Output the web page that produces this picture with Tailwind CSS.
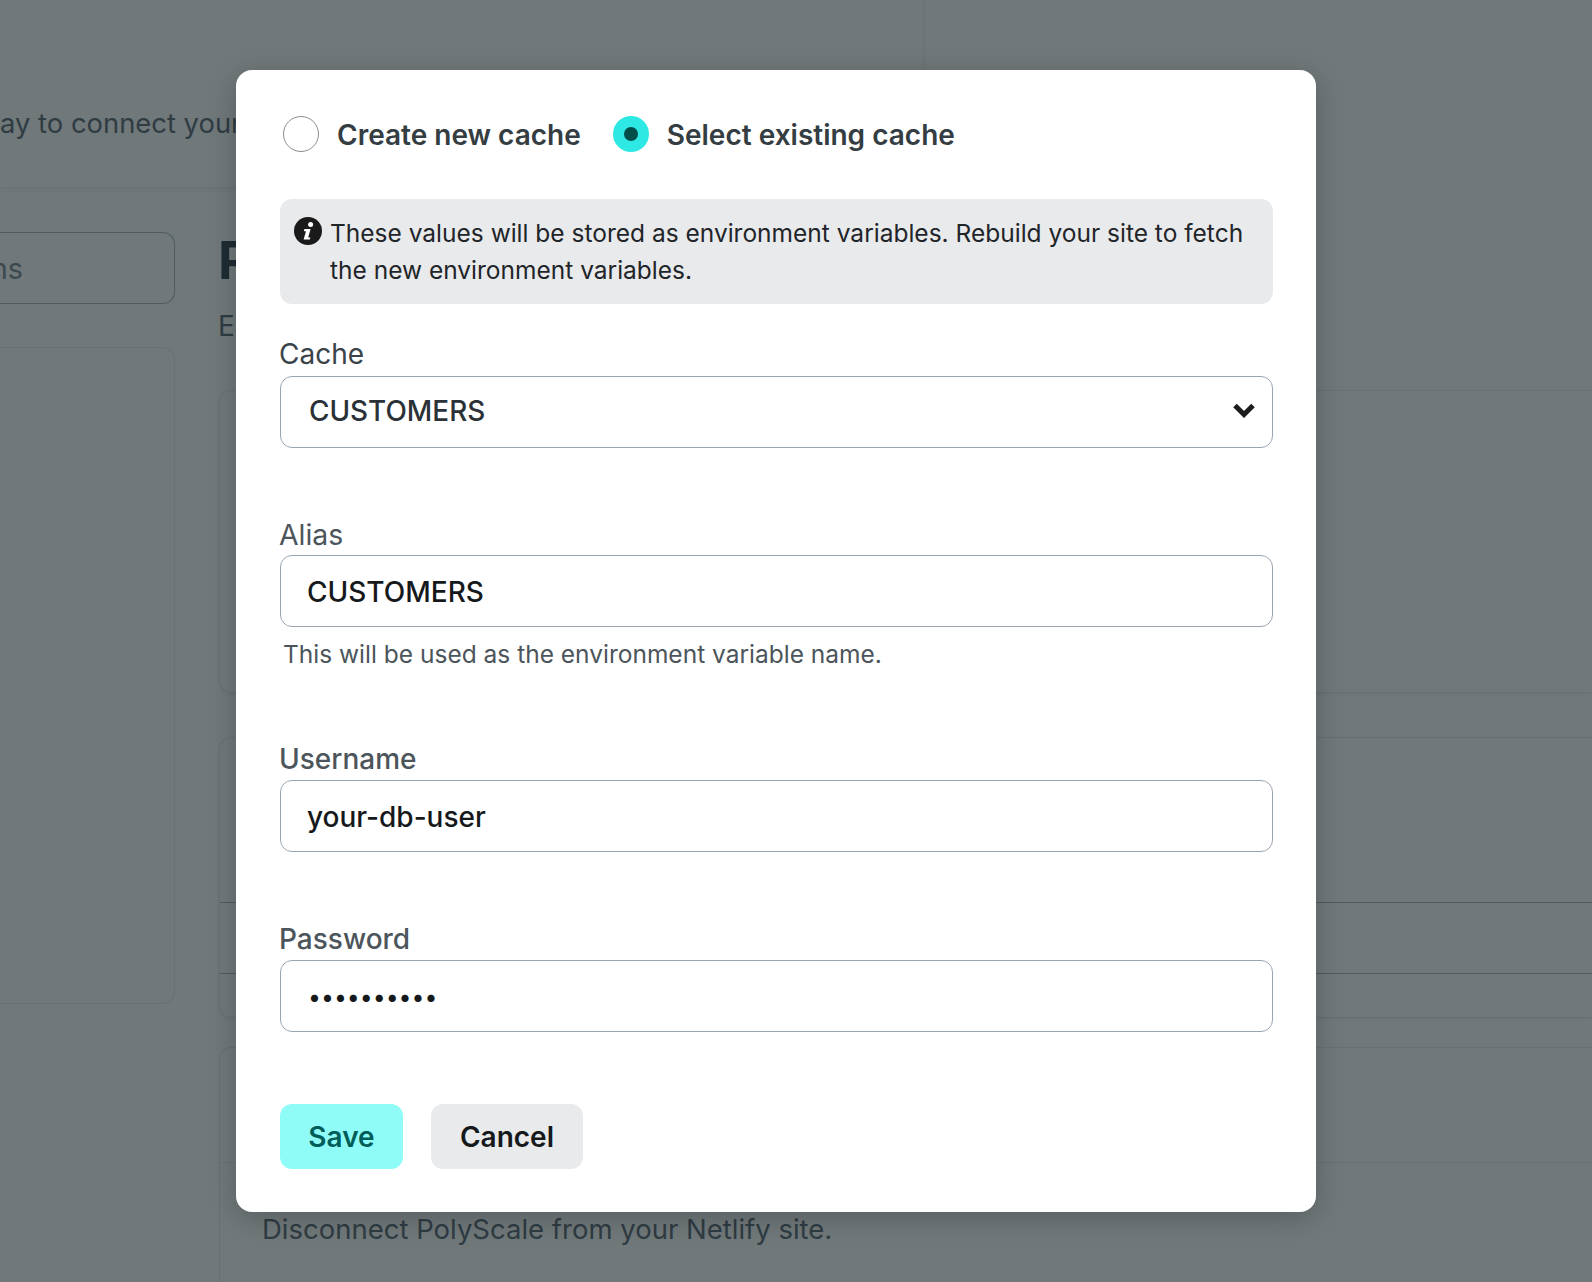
<!DOCTYPE html>
<html>
<head>
    <meta charset="utf-8">
    <title>Select existing cache</title>
    <script src="https://cdn.jsdelivr.net/npm/@tailwindcss/browser@4"></script>
</head>
<body class="bg-[#70787a] font-['Inter','Liberation_Sans',sans-serif]">

<div class="relative w-[1592px] h-[1282px] overflow-hidden">

    <!-- page behind the dialog -->
    <header class="h-[188px] flex">
        <div class="w-[924px] border-r border-b border-[#6a7274] shadow-[0_2px_6px_rgba(0,0,0,0.04)] pt-[105px] text-[27.4px] leading-[37px] text-[#2f3c43] whitespace-nowrap overflow-hidden">
            <p>ay to connect your database</p>
        </div>
    </header>

    <div class="flex pt-[44px]">
        <aside class="w-[175px] shrink-0">
            <div class="h-[72px] flex items-center justify-end pr-[151px] pt-[2px] border border-l-0 border-[#4f5b61] rounded-r-xl text-[28.8px] text-[#3c494f]">ns</div>
            <div class="mt-[43px] h-[657px] border border-l-0 border-[#687072] rounded-r-xl"></div>
        </aside>

        <main class="ml-[44px] flex-1">
            <h1 class="h-[58px] -ml-[1px] text-[52px] leading-[58px] font-bold text-[#1e2c34]">P</h1>
            <p class="mt-[18px] h-[37px] -ml-[1px] text-[28px] leading-[37px] text-[#2f3c43]">E</p>
            <section class="mt-[45px] h-[303px] border border-r-0 border-[#687072] rounded-l-xl shadow-[0_1px_3px_rgba(0,0,0,0.05)]"></section>
            <section class="mt-[44px] h-[281px] border border-r-0 border-[#687072] rounded-l-xl shadow-[0_1px_3px_rgba(0,0,0,0.05)] flex flex-col">
                <div class="mt-[164px] h-[72px] border-y border-[#4f5b61]"></div>
            </section>
            <section class="mt-[29px] h-[260px] border border-r-0 border-[#687072] rounded-l-xl">
                <div class="h-[115px] border-b border-[#687072]"></div>
                <p class="pl-[42px] pt-[48px] text-[27.5px] leading-[37px] text-[#2f3c43] whitespace-nowrap">Disconnect PolyScale from your Netlify site.</p>
            </section>
        </main>
    </div>

    <!-- dialog -->
    <div class="absolute left-[236px] top-[70px] w-[1080px] h-[1142px] bg-white rounded-[16px] shadow-[0_6px_28px_rgba(0,0,0,0.22)] pl-[44px] pr-[43px] pt-[46px] pb-[43px]">

        <div class="flex items-center h-[36px] pl-[3px] text-[28px] font-semibold text-[#343d42]">
            <span class="w-[36px] h-[36px] rounded-full border border-[#8c8c8c] bg-white"></span>
            <span class="ml-[18px] pt-[2px]">Create new cache</span>
            <span class="ml-[32px] w-[36px] h-[36px] rounded-full bg-[#2ee8e4] flex items-center justify-center">
                <span class="w-[14px] h-[14px] rounded-full bg-[#004d4a]"></span>
            </span>
            <span class="ml-[18px] pt-[2px]">Select existing cache</span>
        </div>

        <div class="mt-[47px] h-[105px] bg-[#e9eaec] rounded-[12px] flex pl-[14px] pr-[20px] pt-[16px] text-[24.5px] leading-[37px] text-[#1f2529]">
            <svg class="w-[28px] h-[28px] shrink-0 mt-[2px]" viewBox="0 0 28 28">
                <circle cx="14" cy="14" r="14" fill="#1a1a1a"/>
                <circle cx="16.6" cy="7.4" r="2.5" fill="#fff"/>
                <path d="M10.4 12h6.2l-2.4 8.4h2.1l-.5 2.2h-6.2l2.4-8.4h-2.1z" fill="#fff"/>
            </svg>
            <p class="ml-[8px]">These values will be stored as environment variables. Rebuild your site to fetch the new environment variables.</p>
        </div>

        <label class="block mt-[32px] -ml-px h-[37px] text-[28px] leading-[37px] text-[#3a4349]">Cache</label>
        <div class="relative mt-[3px]">
            <select class="block w-full h-[72px] appearance-none bg-white border border-[#9aa5b1] rounded-[12px] pl-[28px] pr-[60px] text-[27.9px] font-medium text-[#2b3237]">
                <option>CUSTOMERS</option>
            </select>
            <svg class="absolute right-[18px] top-[26px] w-[22px] h-[16px]" viewBox="0 0 22 16">
                <path d="M2 3.5l9 9 9-9" fill="none" stroke="#1d1d1d" stroke-width="5"/>
            </svg>
        </div>

        <label class="block mt-[68px] -ml-px h-[37px] text-[28.4px] leading-[37px] text-[#4c555b]">Alias</label>
        <input type="text" value="CUSTOMERS" class="block mt-[2px] w-full h-[72px] bg-white border border-[#9aa5b1] rounded-[12px] px-[26px] pt-[2px] text-[28px] font-medium text-[#16191b]">
        <p class="mt-[9px] h-[37px] pl-[3px] text-[24.5px] leading-[37px] text-[#4c555b]">This will be used as the environment variable name.</p>

        <label class="block mt-[68px] -ml-px h-[37px] text-[28px] leading-[37px] font-medium text-[#4c555b]">Username</label>
        <input type="text" value="your-db-user" class="block mt-[2px] w-full h-[72px] bg-white border border-[#9aa5b1] rounded-[12px] px-[26px] pt-[2px] text-[28px] font-medium text-[#16191b]">

        <label class="block mt-[69px] -ml-px h-[37px] text-[28px] leading-[37px] font-medium text-[#4c555b]">Password</label>
        <input type="password" value="1234567890" class="block mt-[2px] w-full h-[72px] bg-white border border-[#9aa5b1] rounded-[12px] px-[27px] pt-[2px] text-[23px] text-[#16191b]">

        <div class="mt-[72px] flex gap-[28px]">
            <button class="w-[123px] h-[65px] rounded-[12px] bg-[#8ffcf8] text-[#005e5a] text-[28px] font-semibold">Save</button>
            <button class="w-[152px] h-[65px] rounded-[12px] bg-[#e9eaec] text-[#16191b] text-[28px] font-semibold">Cancel</button>
        </div>
    </div>
</div>

</body>
</html>
